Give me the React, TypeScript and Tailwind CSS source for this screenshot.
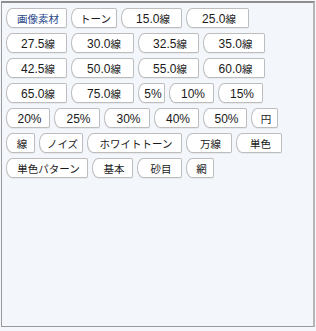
import React from "react";

type Tag = { label: string; w: string; active?: boolean };

const rows: Tag[][] = [
  [
    { label: "画像素材", w: "w-[61px]", active: true },
    { label: "トーン", w: "w-[46px]" },
    { label: "15.0線", w: "w-[61px]" },
    { label: "25.0線", w: "w-[63px]" },
  ],
  [
    { label: "27.5線", w: "w-[61px]" },
    { label: "30.0線", w: "w-[63px]" },
    { label: "32.5線", w: "w-[61px]" },
    { label: "35.0線", w: "w-[62px]" },
  ],
  [
    { label: "42.5線", w: "w-[61px]" },
    { label: "50.0線", w: "w-[63px]" },
    { label: "55.0線", w: "w-[61px]" },
    { label: "60.0線", w: "w-[62px]" },
  ],
  [
    { label: "65.0線", w: "w-[61px]" },
    { label: "75.0線", w: "w-[63px]" },
    { label: "5%", w: "w-[27px]" },
    { label: "10%", w: "w-[45px]" },
    { label: "15%", w: "w-[45px]" },
  ],
  [
    { label: "20%", w: "w-[44px]" },
    { label: "25%", w: "w-[46px]" },
    { label: "30%", w: "w-[46px]" },
    { label: "40%", w: "w-[45px]" },
    { label: "50%", w: "w-[44px]" },
    { label: "円", w: "w-[27px]" },
  ],
  [
    { label: "線", w: "w-[29px]" },
    { label: "ノイズ", w: "w-[44px]" },
    { label: "ホワイトトーン", w: "w-[95px]" },
    { label: "万線", w: "w-[46px]" },
    { label: "単色", w: "w-[46px]" },
  ],
  [
    { label: "単色パターン", w: "w-[82px]" },
    { label: "基本", w: "w-[41px]" },
    { label: "砂目", w: "w-[45px]" },
    { label: "網", w: "w-[28px]" },
  ],
];

function Label({ text }: { text: string }) {
  const parts = text.match(/[\x00-\x7F]+|[^\x00-\x7F]+/g) || [];
  return (
    <span className="pl-[3px] whitespace-nowrap">
      {parts.map((p, i) =>
        /^[\x00-\x7F]+$/.test(p) ? (
          <span key={i} className="text-[12px]">
            {p}
          </span>
        ) : (
          <span key={i} className="text-[10.5px]">
            {p}
          </span>
        )
      )}
    </span>
  );
}

function TagButton({ tag }: { tag: Tag }) {
  return (
    <div
      className={`${tag.w} h-[20px] shrink-0 flex items-center justify-center bg-white border border-[#bdbdbd] rounded-l-[6px_10px] rounded-r-[2px] shadow-[0_1px_0_rgba(0,0,0,0.05)] leading-none ${
        tag.active ? "text-[#2b4a8c]" : "text-[#1a1a1a]"
      }`}
    >
      <Label text={tag.label} />
    </div>
  );
}

export default function App() {
  return (
    <div
      className="w-[316px] h-[331px] bg-[#f4f6fb] pt-[1px] pl-[1px]"
      style={{ fontFamily: '"Liberation Sans", Arial, "Noto Sans CJK JP", sans-serif' }}
    >
      <div className="w-[314px] h-[326px] bg-[#f3f6fb] border border-[#9a9a9a] border-t-2 border-t-[#8e8e8e] border-r-2 border-r-[#b6b6b6] pl-[4px] pt-[5px] flex flex-col gap-[5px]">
        {rows.map((row, i) => (
          <div key={i} className="flex gap-[4px]">
            {row.map((t) => (
              <TagButton key={t.label} tag={t} />
            ))}
          </div>
        ))}
      </div>
    </div>
  );
}
